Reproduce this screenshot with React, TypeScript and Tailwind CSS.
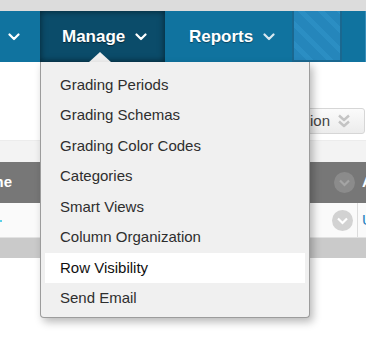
import React from 'react';

const menuItems = [
  'Grading Periods',
  'Grading Schemas',
  'Grading Color Codes',
  'Categories',
  'Smart Views',
  'Column Organization',
  'Row Visibility',
  'Send Email',
];

const Chevron = ({ className = '' }: { className?: string }) => (
  <svg width="12" height="8" viewBox="0 0 12 8" className={className} fill="none">
    <path d="M1.5 1.5 6 6l4.5-4.5" stroke="currentColor" strokeWidth="2.2" strokeLinecap="round" strokeLinejoin="round" />
  </svg>
);

const DoubleChevron = () => (
  <svg width="14" height="16" viewBox="0 0 14 16" fill="none">
    <path d="M2 2.5 7 7l5-4.5" stroke="#c4c4c4" strokeWidth="2.4" strokeLinejoin="round" />
    <path d="M2 8.5 7 13l5-4.5" stroke="#c4c4c4" strokeWidth="2.4" strokeLinejoin="round" />
  </svg>
);

const CircleChevron = ({ bg, fg }: { bg: string; fg: string }) => (
  <svg width="21" height="21" viewBox="0 0 21 21">
    <circle cx="10.5" cy="10.5" r="10.5" fill={bg} />
    <path d="M6 8.5 10.5 13 15 8.5" fill="none" stroke={fg} strokeWidth="2.2" />
  </svg>
);

export default function App() {
  return (
    <div className="relative w-[366px] h-[356px] overflow-hidden bg-white font-['Liberation_Sans',Arial,sans-serif]">
      {/* top strip */}
      <div className="h-[11px] bg-[#dcdcdc]" />

      {/* nav bar */}
      <nav className="flex h-[51px] bg-[#10739f] text-white">
        <div className="w-[40px] flex items-center pl-[8px]">
          <Chevron />
        </div>
        <div className="w-[125px] flex items-center pl-[22px] gap-[10px] bg-[#0b4c6a] shadow-[inset_0_0_7px_rgba(0,0,0,0.55)]">
          <span className="text-[17px] font-bold [text-shadow:0_1px_1px_rgba(0,0,0,0.5)]">Manage</span>
          <Chevron />
        </div>
        <div className="w-[127px] flex items-center pl-[24px] gap-[10px]">
          <span className="text-[17px] font-bold [text-shadow:0_1px_1px_rgba(0,0,0,0.4)]">Reports</span>
          <Chevron className="text-[#d8e8f0]" />
        </div>
        <div className="w-[50px] border-x-2 border-b-2 border-[#1a6890] bg-[repeating-linear-gradient(45deg,#2586bb_0px,#2586bb_9px,#2b8ec3_9px,#2b8ec3_14px)]" />
        <div className="flex-1 flex justify-end">
          <div className="w-[1px] bg-[#3a8fba]" />
        </div>
      </nav>

      {/* page content under the menu */}
      <div className="h-[46px]" />
      <div className="flex justify-end pr-[1px]">
        <div className="h-[26px] flex items-center gap-[7px] pl-[10px] pr-[13px] rounded-[3px] border border-[#d6d6d6] bg-[linear-gradient(#fbfbfb,#ececec)] text-[15px] text-[#444] whitespace-nowrap">
          Layout Position
          <DoubleChevron />
        </div>
      </div>
      <div className="h-[6px]" />
      <div className="h-[22px] bg-[#f3f3f3] border-t border-[#ececec]" />
      <div className="h-[41px] flex items-center bg-[#777777] text-white font-bold text-[15px]">
        <div className="w-[12px] flex justify-end overflow-hidden whitespace-nowrap">Last Name</div>
        <div className="flex-1" />
        <CircleChevron bg="#8b8b8b" fg="#a4a4a4" />
        <div className="w-[7px]" />
        <div className="w-[4px] overflow-hidden">A</div>
      </div>
      <div className="h-[34px] flex items-center bg-[#fafafa] text-[15px]">
        <div className="w-[2px] h-[2px] bg-[#5ad0e8] mt-[2px]" />
        <div className="flex-1" />
        <CircleChevron bg="#d2d2d2" fg="#ffffff" />
        <div className="w-[4px]" />
        <div className="w-[1px] self-stretch bg-[#dcdcdc]" />
        <div className="w-[4px]" />
        <div className="w-[4px] overflow-hidden text-[#1a7fc0]">U</div>
      </div>
      <div className="h-[21px] bg-[#cacaca] border-t border-[#e2e2e2]" />

      {/* dropdown menu */}
      <svg className="absolute left-[88px] top-[52px]" width="24" height="11" viewBox="0 0 24 11">
        <polygon points="0,11 12,0 24,11" fill="#f0f0f0" />
      </svg>
      <div className="absolute left-[40px] top-[62px] w-[270px] h-[256px] bg-[#f0f0f0] border border-t-0 border-[#9c9c9c] rounded-b-[4px] shadow-[3px_4px_8px_rgba(0,0,0,0.28)] px-[4px] pt-[7.5px]">
        {menuItems.map((item) => (
          <div
            key={item}
            className={`h-[30.5px] flex items-center pl-[15px] text-[15px] ${
              item === 'Row Visibility' ? 'bg-white text-[#111]' : 'text-[#2e2e2e]'
            }`}
          >
            {item}
          </div>
        ))}
      </div>
    </div>
  );
}
